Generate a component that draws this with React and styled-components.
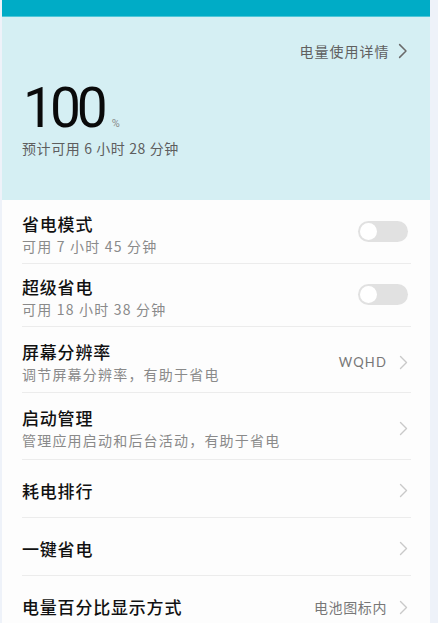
import React, { useState } from 'react'
import styled, { createGlobalStyle } from 'styled-components'

const GlobalStyle = createGlobalStyle`
  body {
    margin: 0;
    background: #eef2f9;
    font-family: "Noto Sans CJK SC", "Noto Sans", sans-serif;
  }
`;

const rows = [
  { title: '省电模式', sub: '可用 7 小时 45 分钟', toggle: true, h: 64 },
  { title: '超级省电', sub: '可用 18 小时 38 分钟', toggle: true, h: 63 },
  { title: '屏幕分辨率', sub: '调节屏幕分辨率，有助于省电', value: 'WQHD', latin: true, arrow: true, h: 66 },
  { title: '启动管理', sub: '管理应用启动和后台活动，有助于省电', arrow: true, h: 67 },
  { title: '耗电排行', arrow: true, h: 58 },
  { title: '一键省电', arrow: true, h: 58 },
  { title: '电量百分比显示方式', value: '电池图标内', arrow: true, h: 58 },
];

const Chevron = ({ color = '#c9c9c9', size = 15 }) => (
  <svg width={size * 0.6} height={size} viewBox="0 0 9 15" fill="none">
    <path d="M1.5 1.5 L7.5 7.5 L1.5 13.5" stroke={color} strokeWidth="1.4" strokeLinecap="round" strokeLinejoin="round" />
  </svg>
);

const App = () => {
  const [on, setOn] = useState({});

  return (
    <>
      <GlobalStyle />
      <Page>
        <TopBar />
        <Header>
          <DetailLink>
            电量使用详情
            <Chevron color="#6a6a6a" size={16} />
          </DetailLink>
          <Level>
            <Big>100</Big>
            <Percent>%</Percent>
          </Level>
          <Estimate>预计可用 6 小时 28 分钟</Estimate>
        </Header>
        <List>
          {rows.map((r, i) => (
            <Row key={r.title} h={r.h} tall={!!r.sub} last={i === rows.length - 1}>
              <Texts>
                <Title>{r.title}</Title>
                {r.sub && <Sub>{r.sub}</Sub>}
              </Texts>
              <Side>
                {r.value && <Value latin={r.latin}>{r.value}</Value>}
                {r.toggle && (
                  <Switch active={on[i]} onClick={() => setOn({ ...on, [i]: !on[i] })}>
                    <Knob active={on[i]} />
                  </Switch>
                )}
                {r.arrow && <Chevron />}
              </Side>
            </Row>
          ))}
        </List>
      </Page>
    </>
  )
}

const Page = styled.div`
  margin-left: 2px;
  width: 428px;
  min-height: 623px;
  background: #fdfdfd;
  display: flex;
  flex-direction: column;
`;

const TopBar = styled.div`
  height: 16px;
  background: #00acc6;
  border-bottom: 1px solid #4ec7d8;
`;

const Header = styled.div`
  height: 183px;
  background: #d5eff3;
  padding: 24px 20px 0 20px;
  box-sizing: border-box;
  display: flex;
  flex-direction: column;
`;

const DetailLink = styled.div`
  align-self: flex-end;
  display: flex;
  align-items: center;
  gap: 9px;
  margin-right: 2px;
  font-size: 14px;
  letter-spacing: 1px;
  color: #606060;
  line-height: 20px;
`;

const Level = styled.div`
  display: flex;
  align-items: baseline;
  margin-top: 15px;
`;

const Big = styled.span`
  font-family: Roboto, "Liberation Sans", sans-serif;
  font-size: 55px;
  line-height: 64px;
  letter-spacing: -4px;
  color: #0a0a0a;
  margin-left: 1px;
`;

const Percent = styled.span`
  font-family: Roboto, sans-serif;
  font-size: 11px;
  line-height: 12px;
  color: #8a8a8a;
  margin-left: 8px;
`;

const Estimate = styled.div`
  font-size: 14px;
  letter-spacing: 0.6px;
  color: #5e5e5e;
  line-height: 16px;
`;

const List = styled.div`
  padding: 0 19px 0 20px;
  display: flex;
  flex-direction: column;
`;

const Row = styled.div`
  display: flex;
  align-items: center;
  justify-content: space-between;
  height: ${p => p.h}px;
  border-bottom: ${p => (p.last ? 'none' : '1px solid #ececec')};
  padding-top: ${p => (p.tall ? 5 : 4)}px;
  box-sizing: border-box;
`;

const Texts = styled.div`
  display: flex;
  flex-direction: column;
  gap: 1px;
`;

const Title = styled.div`
  font-size: 17px;
  font-weight: 500;
  letter-spacing: 0.8px;
  color: #111;
  line-height: 22px;
`;

const Sub = styled.div`
  font-size: 14px;
  letter-spacing: 1.2px;
  color: #8a8a8a;
  line-height: 20px;
`;

const Side = styled.div`
  display: flex;
  align-items: center;
  gap: 12px;
  margin-right: 3px;
`;

const Value = styled.span`
  font-family: ${p => (p.latin ? 'Lato, "Open Sans", sans-serif' : '"Noto Sans CJK SC", sans-serif')};
  font-size: ${p => (p.latin ? 13 : 14)}px;
  letter-spacing: ${p => (p.latin ? 1.2 : 0.6)}px;
  color: #777;
`;

const Switch = styled.div`
  width: 50px;
  height: 21px;
  border-radius: 11px;
  background: ${p => (p.active ? '#00acc6' : '#e1e1e1')};
  display: flex;
  align-items: center;
  padding: 0 2px;
  box-sizing: border-box;
  justify-content: ${p => (p.active ? 'flex-end' : 'flex-start')};
  cursor: pointer;
  margin-bottom: 6px;
`;

const Knob = styled.div`
  width: 17px;
  height: 17px;
  border-radius: 50%;
  background: #fff;
`;

export default App
